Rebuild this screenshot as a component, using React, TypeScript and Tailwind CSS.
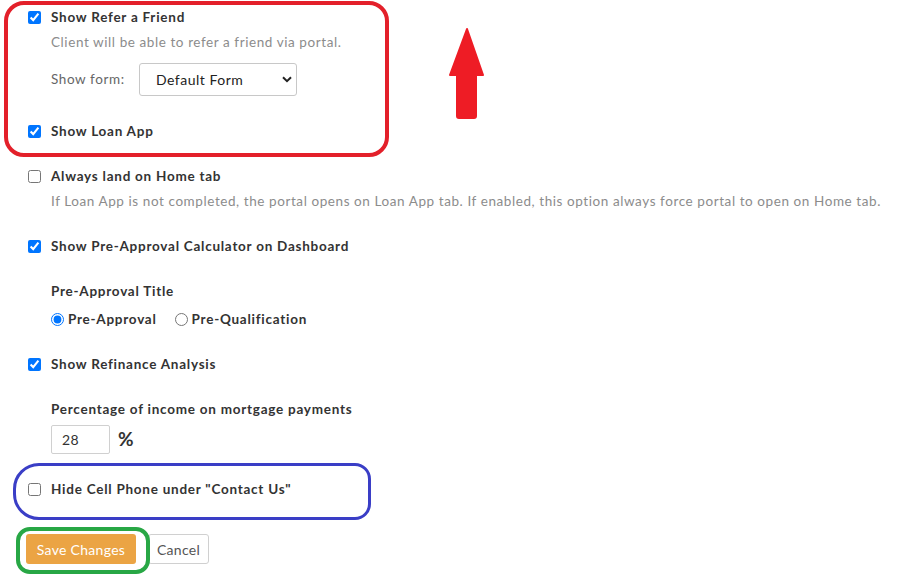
import React from 'react';

// shared text styles
const LABEL = 'font-bold text-[13.5px] text-[#333] tracking-[0.75px]';
const MUTED = 'text-[13.5px] text-[#8c8c8c] tracking-[0.58px]';

// ── Small building blocks ─────────────────────────────────────────────────────

function Check({ checked, label }: { checked?: boolean; label: string }) {
  return (
    <label className="flex items-center h-[20px] pl-[28px]">
      <input
        type="checkbox"
        defaultChecked={checked}
        className="w-[13px] h-[13px] m-0 accent-[#0075ff]"
      />
      <span className={`ml-[10px] ${LABEL}`}>{label}</span>
    </label>
  );
}

function Hint({ children }: { children: React.ReactNode }) {
  return (
    <p className={`mt-[5px] h-[20px] leading-[20px] pl-[51px] whitespace-nowrap ${MUTED}`}>
      {children}
    </p>
  );
}

function Radio({ checked, label, name }: { checked?: boolean; label: string; name: string }) {
  return (
    <label className="flex items-center">
      <input
        type="radio"
        name={name}
        defaultChecked={checked}
        className="w-[13px] h-[13px] m-0 accent-[#0075ff]"
      />
      <span className={`ml-[4px] ${LABEL}`}>{label}</span>
    </label>
  );
}

// ── Page ──────────────────────────────────────────────────────────────────────

export default function App() {
  return (
    <div
      className="relative w-[900px] h-[575px] bg-white overflow-hidden pt-[7px]"
      style={{ fontFamily: 'Lato, "Noto Sans", Arial, sans-serif' }}
    >
      <Check checked label="Show Refer a Friend" />
      <Hint>Client will be able to refer a friend via portal.</Hint>

      <div className="mt-[11px] flex items-center h-[33px] pl-[51px]">
        <span className="text-[13.5px] text-[#666] tracking-[0.6px] w-[88px]">Show form:</span>
        <div className="relative w-[158px] h-[33px]">
          <select className="appearance-none w-full h-full border border-[#c8c8c8] rounded-[3px] bg-white pl-[16px] text-[14px] tracking-[0.5px] text-[#222] outline-none">
            <option>Default Form</option>
          </select>
          <svg
            className="absolute right-[5px] top-[13px] pointer-events-none"
            width="10"
            height="7"
            viewBox="0 0 10 7"
          >
            <path d="M1 1.2 L5 5.2 L9 1.2" fill="none" stroke="#222" strokeWidth="2" />
          </svg>
        </div>
      </div>

      <div className="mt-[25px]">
        <Check checked label="Show Loan App" />
      </div>

      <div className="mt-[25px]">
        <Check label="Always land on Home tab" />
      </div>
      <Hint>
        If Loan App is not completed, the portal opens on Loan App tab. If enabled, this option always force
        portal to open on Home tab.
      </Hint>

      <div className="mt-[25px]">
        <Check checked label="Show Pre-Approval Calculator on Dashboard" />
      </div>

      <p className={`mt-[25px] h-[20px] leading-[20px] pl-[51px] ${LABEL}`}>Pre-Approval Title</p>
      <div className="mt-[8px] h-[20px] flex items-center gap-[18px] pl-[51px]">
        <Radio name="title" checked label="Pre-Approval" />
        <Radio name="title" label="Pre-Qualification" />
      </div>

      <div className="mt-[25px]">
        <Check checked label="Show Refinance Analysis" />
      </div>

      <p className={`mt-[25px] h-[20px] leading-[20px] pl-[51px] ${LABEL}`}>
        Percentage of income on mortgage payments
      </p>
      <div className="mt-[6px] flex items-center pl-[51px]">
        <input
          defaultValue="28"
          className="w-[59px] h-[29px] border border-[#d0d0d0] rounded-[2px] pl-[10px] text-[14px] tracking-[0.5px] text-[#333] outline-none"
        />
        <span className="ml-[8px] font-bold text-[19px] text-[#333]">%</span>
      </div>

      <div className="mt-[25px]">
        <Check label='Hide Cell Phone under "Contact Us"' />
      </div>

      <div className="mt-[35px] flex items-center gap-[12px] pl-[26px]">
        <button className="h-[30px] w-[110px] rounded-[3px] bg-[#eba444] text-white text-[14px] tracking-[0.3px]">
          Save Changes
        </button>
        <button className="h-[30px] w-[61px] rounded-[3px] border border-[#d0d0d0] bg-white text-[#555] text-[14px] tracking-[0.3px]">
          Cancel
        </button>
      </div>

      {/* ── Annotation overlays ─────────────────────────────────────────── */}
      <div className="absolute left-[4px] top-[1px] w-[385px] h-[156px] border-[4px] border-[#e3202a] rounded-[20px] pointer-events-none" />
      <div className="absolute left-[13px] top-[463px] w-[358px] h-[57px] border-[3px] border-[#3a3ec6] rounded-l-[26px] rounded-r-[16px] pointer-events-none" />
      <div className="absolute left-[16px] top-[527px] w-[134px] h-[47px] border-[4px] border-[#28a745] rounded-[14px] pointer-events-none" />
      <svg className="absolute left-[448px] top-[27px] pointer-events-none" width="38" height="93" viewBox="0 0 38 93">
        <path
          d="M19 2 L35 48 L28 48 L28 89 Q28 91 26 91 L11 91 Q9 91 9 89 L9 48 L2 48 Z"
          fill="#ee1c25"
          stroke="#ee1c25"
          strokeLinejoin="round"
          strokeWidth="2"
        />
      </svg>
    </div>
  );
}
